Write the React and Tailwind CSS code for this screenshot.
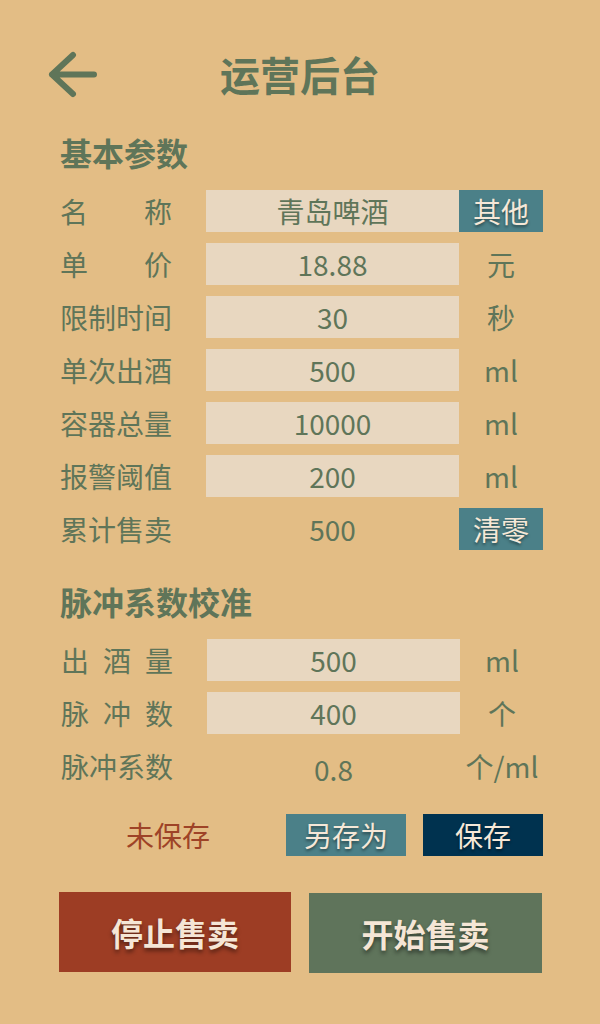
import React from 'react';

const green = 'text-[#5F7559]';

const Label = ({ chars }) => (
  <div className={`w-[112px] shrink-0 flex justify-between text-[28px] ${green}`}>
    {chars.map((c, i) => (
      <span key={i}>{c}</span>
    ))}
  </div>
);

const Field = ({ label, value, unit, button, plain }) => (
  <div className="flex items-center h-[42px]">
    <Label chars={label} />
    <div
      className={`ml-[34px] w-[253px] shrink-0 h-[42px] flex items-center justify-center text-[28px] ${green} ${
        plain ? '' : 'bg-[#E8D7C0]'
      }`}
    >
      {value}
    </div>
    {button ? (
      <button className="w-[84px] shrink-0 h-[42px] bg-[#4B8088] text-[28px] text-[#F5E8D8] [text-shadow:0_2px_3px_rgba(0,0,0,0.45)]">
        {button}
      </button>
    ) : (
      <div className={`w-[84px] shrink-0 flex justify-center whitespace-nowrap text-[28px] ${green}`}>{unit}</div>
    )}
  </div>
);

const App = () => {
  return (
    <div className="w-[600px] h-[1024px] bg-[#E3BD85] font-['Noto_Sans_CJK_SC',sans-serif] leading-none">
      {/* header */}
      <div className="pt-[51px] px-[48px] grid grid-cols-[50px_1fr_50px] items-center h-[99px]">
        <svg width="50" height="48" viewBox="0 0 50 48" className="-mt-[3px]">
          <path
            d="M25 5 L4 24.5 L25 44 M4 24.5 H46"
            fill="none"
            stroke="#5F7559"
            strokeWidth="6"
            strokeLinecap="round"
            strokeLinejoin="round"
          />
        </svg>
        <h1 className={`text-center text-[40px] font-bold ${green} -mt-[2px]`}>运营后台</h1>
        <div />
      </div>

      <div className="pl-[60px] w-[543px]">
        <h2 className={`mt-[37px] text-[32px] font-bold ${green}`}>基本参数</h2>

        <div className="mt-[22px] flex flex-col gap-[11px]">
          <Field label={['名', '称']} value="青岛啤酒" button="其他" />
          <Field label={['单', '价']} value="18.88" unit="元" />
          <Field label={['限', '制', '时', '间']} value="30" unit="秒" />
          <Field label={['单', '次', '出', '酒']} value="500" unit="ml" />
          <Field label={['容', '器', '总', '量']} value="10000" unit="ml" />
          <Field label={['报', '警', '阈', '值']} value="200" unit="ml" />
          <Field label={['累', '计', '售', '卖']} value="500" plain button="清零" />
        </div>

        <h2 className={`mt-[35px] text-[32px] font-bold ${green}`}>脉冲系数校准</h2>

        <div className="mt-[22px] flex flex-col gap-[11px] pl-px">
          <Field label={['出', '酒', '量']} value="500" unit="ml" />
          <Field label={['脉', '冲', '数']} value="400" unit="个" />
          <Field label={['脉', '冲', '系', '数']} value={<span className="mt-[6px]">0.8</span>} unit="个/ml" plain />
        </div>

        <div className="mt-[27px] flex items-center h-[42px]">
          <div className="flex-1 text-center text-[28px] text-[#9E4327]">未保存</div>
          <button className="ml-[10px] w-[120px] shrink-0 h-[42px] bg-[#4B8088] text-[28px] text-[#F5E8D8] [text-shadow:0_2px_3px_rgba(0,0,0,0.45)]">
            另存为
          </button>
          <button className="ml-[17px] w-[120px] shrink-0 h-[42px] bg-[#00324F] text-[28px] text-[#F5E8D8] [text-shadow:0_2px_3px_rgba(0,0,0,0.45)]">
            保存
          </button>
        </div>

        <div className="mt-[36px] flex items-start -ml-px gap-[18px]">
          <button className="w-[232px] shrink-0 h-[80px] bg-[#9D3D24] text-[32px] font-bold text-[#F5E6D6] [text-shadow:0_3px_4px_rgba(0,0,0,0.45)]">
            停止售卖
          </button>
          <button className="mt-px w-[233px] shrink-0 h-[80px] bg-[#5F745B] text-[32px] font-bold text-[#F5E6D6] [text-shadow:0_3px_4px_rgba(0,0,0,0.45)]">
            开始售卖
          </button>
        </div>
      </div>
    </div>
  );
};

export default App;
